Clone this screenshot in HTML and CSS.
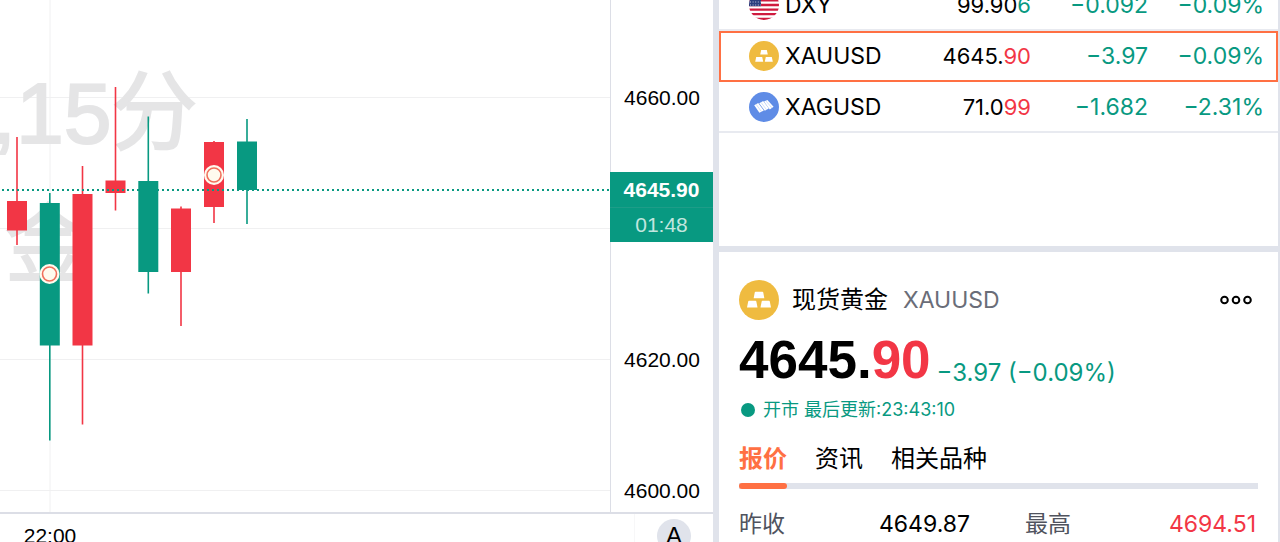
FILE: index.html
```
<!DOCTYPE html>
<html lang="zh-CN">
<head>
	<meta charset="utf-8">
	<title>现货黄金 XAUUSD</title>
	<link rel="stylesheet" href="styles.css">
</head>
<body>

<div class="app">

	<!-- K线图 -->
	<div class="chart">
		<div class="chartMain">
			<svg class="plot" width="100%" height="100%">
				<g class="grid">
					<line x1="0" y1="97.5" x2="100%" y2="97.5" />
					<line x1="0" y1="228.5" x2="100%" y2="228.5" />
					<line x1="0" y1="359.5" x2="100%" y2="359.5" />
					<line x1="0" y1="490.5" x2="100%" y2="490.5" />
					<line x1="50" y1="0" x2="50" y2="100%" />
				</g>
				<g class="watermark">
					<text x="-8" y="143">,15分</text>
					<text x="5" y="276">金</text>
				</g>
				<!-- 上涨 -->
				<g class="up">
					<path d="M17 137V245M82.5 166V424.5M115.5 87V210.5M181 206.5V326M214 141V223" />
					<rect x="7" y="201" width="20" height="29.5" />
					<rect x="72.5" y="194" width="20" height="151.5" />
					<rect x="105.5" y="180.5" width="20" height="12.5" />
					<rect x="171" y="208.5" width="20" height="63.5" />
					<rect x="204" y="142" width="20" height="65" />
				</g>
				<!-- 下跌 -->
				<g class="down">
					<path d="M49.8 193V440.5M148.3 116.5V293.5M247 119V224" />
					<rect x="39.8" y="203" width="20" height="142.5" />
					<rect x="138.3" y="181" width="20" height="91" />
					<rect x="237" y="141.5" width="20" height="48.5" />
				</g>
				<line class="last" x1="2" y1="190" x2="100%" y2="190" />
				<g class="mark">
					<circle cx="49.5" cy="274" r="10" /><circle class="ring" cx="49.5" cy="274" r="7" />
					<circle cx="214" cy="175" r="10" /><circle class="ring" cx="214" cy="175" r="7" />
				</g>
			</svg>
			<div class="scale">
				<svg width="100%" height="100%">
					<text x="50%" y="105">4660.00</text>
					<text x="50%" y="367">4620.00</text>
					<text x="50%" y="498">4600.00</text>
				</svg>
				<div class="tag">
					<b>4645.90</b>
					<span>01:48</span>
				</div>
			</div>
		</div>
		<div class="timeBar">
			<span class="time">22:00</span>
			<div class="corner"><button type="button" class="auto">A</button></div>
		</div>
	</div>

	<!-- 右侧栏 -->
	<div class="side">
		<div class="watch">
			<table>
				<colgroup><col><col class="cPrice"><col class="cChg"><col class="cPct"></colgroup>
				<tr>
					<td>
						<div class="sym">
							<svg class="ico" viewBox="0 0 30 30">
								<clipPath id="round"><circle cx="15" cy="15" r="15" /></clipPath>
								<g clip-path="url(#round)">
									<rect width="30" height="30" fill="#fff" />
									<path d="M0 1.2H30M0 5.8H30M0 10.4H30M0 15H30M0 19.6H30M0 24.2H30M0 28.8H30" stroke="#cf1b3f" stroke-width="2.3" />
									<rect width="12" height="16.2" fill="#2b3f7e" />
									<path d="M1 3H12M1 6H12M1 9H12M1 12H12M1 15H12" stroke="#c3cae0" stroke-width="1" stroke-dasharray="1 1.6" />
								</g>
							</svg>
							DXY
						</div>
					</td>
					<td class="price">99.90<span class="green">6</span></td>
					<td class="green">−0.092</td>
					<td class="green">−0.09%</td>
				</tr>
				<tr class="on">
					<td>
						<div class="sym">
							<svg class="ico" viewBox="0 0 30 30">
								<circle cx="15" cy="15" r="15" fill="#efbb40" />
								<path fill="#fff" d="M12.2 9h5.6l1 4.6h-7.6zM7.2 16h6l1 4.8H6.2zM16.8 16h6l1 4.8h-8z" />
							</svg>
							XAUUSD
						</div>
					</td>
					<td class="price">4645.<span class="red">90</span></td>
					<td class="green">−3.97</td>
					<td class="green">−0.09%</td>
				</tr>
				<tr>
					<td>
						<div class="sym">
							<svg class="ico" viewBox="0 0 30 30">
								<circle cx="15" cy="15" r="15" fill="#5f8ce6" />
								<path fill="#fff" d="M5.2 13.2l4-2.2 5.6 7.4-4.4 2.4zM10.2 11.2l4-2.2 5.6 7.4-4 2.4zM15 9.6l3.4-1.6 6.2 6.8-3.8 2.6z" />
								<path fill="none" stroke="#a9c1f1" stroke-width=".5" d="M7 12.2l5.6 7.6M12 10.4l5.6 7.4M16.8 8.8l6 7" />
							</svg>
							XAGUSD
						</div>
					</td>
					<td class="price">71.0<span class="red">99</span></td>
					<td class="green">−1.682</td>
					<td class="green">−2.31%</td>
				</tr>
			</table>
		</div>

		<!-- 品种详情 -->
		<div class="detail">
			<div class="head">
				<svg class="logo" viewBox="0 0 30 30">
					<circle cx="15" cy="15" r="15" fill="#efbb40" />
					<path fill="#fff" d="M12.4 8.8h5.2q.5 0 .6.5l.8 4.3h-8l.8-4.3q.1-.5.6-.5zM7.5 15.6h4.9q.5 0 .6.5l.9 4.5H6l.9-4.5q.1-.5.6-.5zM17.6 15.6h4.9q.5 0 .6.5l.9 4.5h-7.9l.9-4.5q.1-.5.6-.5z" />
				</svg>
				<h2>现货黄金</h2>
				<span class="code">XAUUSD</span>
				<button type="button" class="more" aria-label="更多">
					<svg width="32" height="10" viewBox="0 0 32 10">
						<circle cx="4.5" cy="5" r="3.3" /><circle cx="16" cy="5" r="3.3" /><circle cx="27.5" cy="5" r="3.3" />
					</svg>
				</button>
			</div>
			<div class="quote">
				<strong>4645.<span class="red">90</span></strong>
				<span class="green">−3.97 (−0.09%)</span>
			</div>
			<p class="status"><i></i>开市 最后更新:23:43:10</p>
			<div class="tabs">
				<button type="button" class="on">报价</button>
				<button type="button">资讯</button>
				<button type="button">相关品种</button>
			</div>
			<dl>
				<div><dt>昨收</dt><dd>4649.87</dd></div>
				<div><dt>最高</dt><dd class="red">4694.51</dd></div>
			</dl>
		</div>
	</div>

</div>

</body>
</html>
```

FILE: styles.css
```
* { margin:0; padding:0; box-sizing:border-box; }
body { font-family:Inter, "Noto Sans CJK SC", sans-serif; color:#000; background:#fff; overflow:hidden; }
button { border:0; background:none; font-family:inherit; color:inherit; cursor:pointer; }

.app { display:flex; height:100vh; background:#e0e3eb; gap:6px; padding-right:2px; }
.green { color:#089981; }
.red { color:#f23645; }

/* 图表 */
.chart { flex:1; min-width:0; display:flex; flex-direction:column; background:#fff; font-family:"Liberation Sans", "Noto Sans CJK SC", sans-serif; font-size:21px; }
.chartMain { flex:1; min-height:0; display:flex; border-bottom:2px solid #dcdee6; }
.plot { flex:1; min-width:0; display:block; }
.grid line { stroke:#f0f0f1; stroke-width:1; }
.watermark text { font-size:86px; fill:#e5e5e6; stroke:#e5e5e6; stroke-width:2; }
.up { fill:#f23645; stroke:none; }
.up path { stroke:#f23645; stroke-width:1.6; }
.down { fill:#089981; stroke:none; }
.down path { stroke:#089981; stroke-width:1.6; }
.last { stroke:#089981; stroke-width:2; stroke-dasharray:2 3; }
.mark circle { fill:#fffbef; }
.mark .ring { fill:none; stroke:#f0705c; stroke-width:1.6; }

.scale { position:relative; width:103px; border-left:1px solid #dcdee6; }
.scale svg { display:block; }
.scale text { text-anchor:middle; }
.tag { position:absolute; left:-1px; right:0; top:172px; padding-top:1px; background:#089981; color:#fff; text-align:center; }
.tag b, .tag span { display:block; line-height:34px; }
.tag span { border-top:1px solid #1d9d88; color:#c2e6df; }

.timeBar { flex:none; height:28px; display:flex; justify-content:space-between; overflow:hidden; }
.time { width:100px; text-align:center; line-height:44px; }
.corner { width:79px; padding:5px 0 0 22px; border-left:1px solid #f7f7f8; }
.auto { width:34px; height:34px; border-radius:50%; background:#e0e3eb; font-size:24px; line-height:32px; }

/* 自选列表 */
.side { width:559px; display:flex; flex-direction:column; gap:6px; }
.watch { height:246px; background:#fff; overflow:hidden; }
table { width:100%; margin-top:-20px; border-spacing:0; table-layout:fixed; font-size:23px; }
.cPrice { width:110px; }
.cChg { width:117px; }
.cPct { width:130px; }
td { height:51px; border-bottom:2px solid #e8eaf0; text-align:right; white-space:nowrap; }
td:first-child { padding-left:30px; }
td:last-child { padding-right:14px; }
.price { font-size:22px; }
tr.on { outline:2px solid #ff7043; outline-offset:-2px; }
.sym { display:flex; align-items:center; gap:6px; }
.ico { width:30px; height:30px; }

/* 详情 */
.detail { flex:1; min-height:0; padding:28px 20px 0; background:#fff; overflow:hidden; }
.head { display:flex; align-items:center; height:40px; }
.logo { width:40px; height:40px; margin-right:13px; }
.head h2 { font-size:24px; font-weight:400; line-height:40px; }
.code { margin-left:15px; font-size:23px; color:#6a6d78; }
.more { margin-left:auto; padding:6px; display:flex; }
.more circle { fill:none; stroke:#000; stroke-width:2; }
.quote { display:flex; align-items:flex-end; gap:6px; margin-top:10px; line-height:60px; }
.quote strong { font-family:"Liberation Sans", sans-serif; font-size:53px; }
.quote > span { font-size:24px; line-height:34px; }
.status { display:flex; align-items:center; margin-top:6px; font-size:18px; line-height:28px; color:#089981; }
.status i { width:14px; height:14px; margin:0 8px 0 2px; border-radius:50%; background:#089981; }
.tabs { display:flex; gap:28px; margin-top:14px; box-shadow:inset 0 -6px #e0e3eb; }
.tabs button { padding-bottom:9px; font-size:24px; line-height:42px; }
.tabs .on { position:relative; color:#ff7043; font-weight:bold; }
.tabs .on:after { content:""; position:absolute; left:0; right:0; bottom:0; height:6px; border-radius:3px; background:#ff7043; }
dl { display:grid; grid-template-columns:1fr 1fr; gap:0 55px; margin-top:15px; padding-right:2px; font-size:23px; line-height:40px; }
dl div { display:flex; justify-content:space-between; }
dt { color:#50535e; }
```
